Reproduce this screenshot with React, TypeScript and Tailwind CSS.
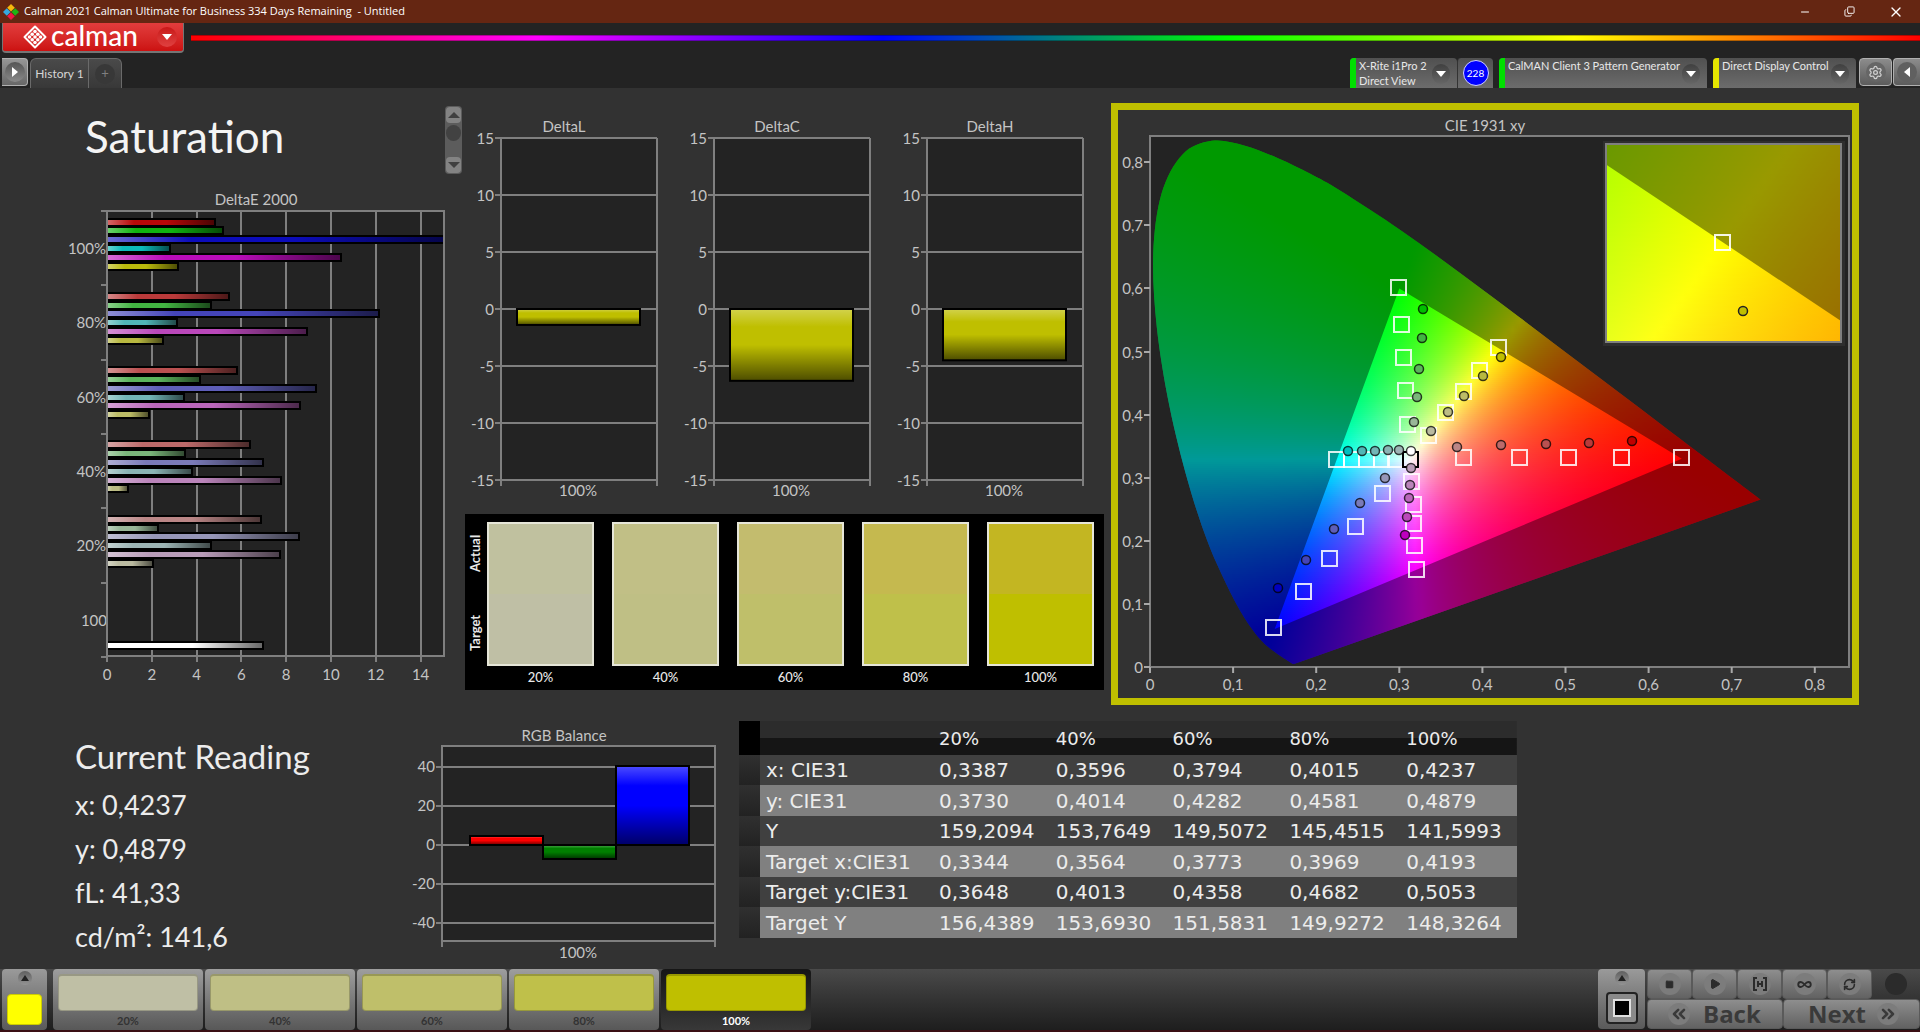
import React from 'react';
import { Minus, Copy, X, Settings, Play, Square, RefreshCw, Infinity as InfinityIcon, ChevronsLeft, ChevronsRight } from 'lucide-react';

type Point = [number, number];

interface Series {
  label: string;
  ends: number[];
  colors: string[];
}

const AXIS = '#7f7f7f';
const LABEL = '#c4c4c4';

const deltaE: Series[] = [
  { label: '100%', ends: [215, 223, 444, 170, 341, 178], colors: ['#b80808', '#10b410', '#0c0cba', '#0cbaba', '#ba0cba', '#baba0c'] },
  { label: '80%', ends: [229, 211, 379, 177, 307, 163], colors: ['#ba3a3a', '#42b442', '#4444b8', '#50b6b6', '#ba48ba', '#b8b840'] },
  { label: '60%', ends: [237, 200, 316, 184, 300, 149], colors: ['#ba5050', '#5cb45c', '#5e5eb8', '#72b6b6', '#ba66ba', '#bcbc66'] },
  { label: '40%', ends: [250, 185, 263, 192, 281, 128], colors: ['#bc6a6a', '#7ab67a', '#7a7ab8', '#8ab4b4', '#ba84ba', '#bcbc84'] },
  { label: '20%', ends: [261, 158, 299, 211, 280, 153], colors: ['#ba8686', '#98b698', '#9696b8', '#9cb4b4', '#b89cb8', '#babaa0'] },
];

const saturations = [
  { label: '20%', actual: '#c0c19f', target: '#bfbfa5' },
  { label: '40%', actual: '#c1bf86', target: '#bfbf85' },
  { label: '60%', actual: '#c3bc6e', target: '#bfbf6a' },
  { label: '80%', actual: '#c5b94f', target: '#bfc04a' },
  { label: '100%', actual: '#c3b622', target: '#bfbf00' },
];

const readings = [
  { label: 'x: CIE31', values: ['0,3387', '0,3596', '0,3794', '0,4015', '0,4237'] },
  { label: 'y: CIE31', values: ['0,3730', '0,4014', '0,4282', '0,4581', '0,4879'] },
  { label: 'Y', values: ['159,2094', '153,7649', '149,5072', '145,4515', '141,5993'] },
  { label: 'Target x:CIE31', values: ['0,3344', '0,3564', '0,3773', '0,3969', '0,4193'] },
  { label: 'Target y:CIE31', values: ['0,3648', '0,4013', '0,4358', '0,4682', '0,5053'] },
  { label: 'Target Y', values: ['156,4389', '153,6930', '151,5831', '149,9272', '148,3264'] },
];

// Spectral locus, CIE 1931 2 degree observer
const locus: Point[] = [
  [0.1741, 0.005], [0.1714, 0.0051], [0.1644, 0.0109], [0.1566, 0.0177], [0.144, 0.0297], [0.1355, 0.0399],
  [0.1241, 0.0578], [0.1096, 0.0868], [0.0913, 0.1327], [0.0687, 0.2007], [0.0454, 0.295], [0.0235, 0.4127],
  [0.0082, 0.5384], [0.0039, 0.6548], [0.0139, 0.7502], [0.0389, 0.812], [0.0743, 0.8338], [0.1142, 0.8262],
  [0.1547, 0.8059], [0.1929, 0.7816], [0.2296, 0.7543], [0.3016, 0.6923], [0.3731, 0.6245], [0.4441, 0.5547],
  [0.5125, 0.4866], [0.5752, 0.4242], [0.627, 0.3725], [0.6658, 0.334], [0.6915, 0.3083], [0.719, 0.2809], [0.7347, 0.2653],
];
const gamut: Point[] = [[0.64, 0.33], [0.3, 0.6], [0.15, 0.06]];

const targets: Point[] = [
  [1463, 457], [1519, 457], [1568, 457], [1621, 457], [1681, 457],
  [1398, 287], [1401, 324], [1403, 357], [1405, 390], [1407, 424],
  [1498, 347], [1479, 370], [1463, 391], [1445, 412], [1428, 435],
  [1336, 459], [1351, 459], [1366, 459], [1381, 459], [1395, 459],
  [1411, 481], [1413, 504], [1413, 523], [1414, 545], [1416, 569],
  [1382, 493], [1355, 526], [1329, 558], [1303, 591], [1273, 627],
];
const measured: [number, number, string][] = [
  [1457, 447, '#bc8686'], [1501, 445, '#bc6a6a'], [1546, 444, '#ba5050'], [1589, 443, '#ba3a3a'], [1632, 441, '#bf0000'],
  [1414, 422, '#98b698'], [1417, 397, '#7ab67a'], [1419, 369, '#5cb45c'], [1422, 338, '#42b442'], [1423, 309, '#00bf00'],
  [1431, 431, '#babaa0'], [1448, 412, '#bcbc84'], [1464, 396, '#bcbc66'], [1483, 376, '#b8b840'], [1501, 357, '#bfbf00'],
  [1399, 450, '#9cb4b4'], [1388, 450, '#8ab4b4'], [1375, 451, '#72b6b6'], [1362, 451, '#50b6b6'], [1348, 451, '#00bfbf'],
  [1411, 468, '#b89cb8'], [1410, 485, '#ba84ba'], [1409, 498, '#ba66ba'], [1407, 517, '#ba48ba'], [1405, 535, '#bf00bf'],
  [1385, 478, '#9696b8'], [1360, 503, '#7a7ab8'], [1334, 529, '#5e5eb8'], [1306, 560, '#4444b8'], [1278, 588, '#0000bf'],
  [1411, 451, '#ffffff'],
];

function xyColor(x: number, y: number) {
  const X = x / y;
  const Z = (1 - x - y) / y;
  const rgb = [
    3.2406 * X - 1.5372 - 0.4986 * Z,
    -0.9689 * X + 1.8758 + 0.0415 * Z,
    0.0557 * X - 0.204 + 1.057 * Z,
  ].map((c) => Math.max(0, c));
  const peak = Math.max(...rgb);
  const [r, g, b] = rgb.map((c) => Math.round((255 * c) / peak));
  return `rgb(${r},${g},${b})`;
}

interface ChromaFieldProps {
  id: string;
  left: number;
  right: number;
  top: number;
  bottom: number;
  toX: (px: number) => number;
  toY: (py: number) => number;
}

// Chromaticity colours as thin rows, each one with its own horizontal gradient
function ChromaField({ id, left, right, top, bottom, toX, toY }: ChromaFieldProps) {
  const rows: number[] = [];
  for (let py = top; py < bottom; py += 2) rows.push(py);
  const stops = Math.round((right - left) / 7);
  return (
    <g shapeRendering="crispEdges">
      {rows.map((py) => (
        <React.Fragment key={py}>
          <linearGradient id={`${id}${py}`} gradientUnits="userSpaceOnUse" x1={left} x2={right} y1="0" y2="0">
            {Array.from({ length: stops + 1 }, (_, i) => (
              <stop key={i} offset={i / stops} stopColor={xyColor(toX(left + ((right - left) * i) / stops), Math.max(0.002, toY(py + 1)))} />
            ))}
          </linearGradient>
          <rect x={left} y={py} width={right - left} height={Math.min(2, bottom - py)} fill={`url(#${id}${py})`} />
        </React.Fragment>
      ))}
    </g>
  );
}

function ShadeDefs() {
  return (
    <svg className="absolute h-0 w-0" aria-hidden="true">
      <defs>
        <linearGradient id="shadeX">
          <stop offset="0" stopColor="#fff" stopOpacity="0.4" />
          <stop offset="0.25" stopColor="#fff" stopOpacity="0" />
          <stop offset="0.55" stopColor="#000" stopOpacity="0" />
          <stop offset="1" stopColor="#000" stopOpacity="0.6" />
        </linearGradient>
        <linearGradient id="shadeY" x2="0" y2="1">
          <stop offset="0" stopColor="#fff" stopOpacity="0.3" />
          <stop offset="0.25" stopColor="#fff" stopOpacity="0" />
          <stop offset="0.5" stopColor="#000" stopOpacity="0" />
          <stop offset="1" stopColor="#000" stopOpacity="0.6" />
        </linearGradient>
      </defs>
    </svg>
  );
}

interface BarProps {
  x: number;
  y: number;
  w: number;
  h: number;
  color: string;
  shade: string;
}

function Bar({ x, y, w, h, color, shade }: BarProps) {
  return (
    <g>
      <rect x={x} y={y} width={w} height={h} fill={color} />
      <rect x={x} y={y} width={w} height={h} fill={shade} stroke="#000" strokeWidth="2" />
    </g>
  );
}

function DeltaEChart() {
  const step = 74.3;
  return (
    <svg viewBox="0 190 465 500" className="block w-full text-[15px]" role="img" aria-label="DeltaE 2000">
      <rect x="107" y="211" width="337" height="445" fill="#232323" />
      <text x="256" y="205" textAnchor="middle" fill={LABEL}>DeltaE 2000</text>
      {[0, 2, 4, 6, 8, 10, 12, 14].map((v) => (
        <g key={v}>
          <path d={`M${Math.round(107 + v * 22.4)} 211V662`} stroke={AXIS} strokeWidth="2" />
          <text x={107 + v * 22.4} y="680" textAnchor="middle" fill={LABEL}>{v}</text>
        </g>
      ))}
      {deltaE.map((group, g) => (
        <g key={group.label}>
          <text x="106" y={Math.round(254 + g * step)} textAnchor="end" fill={LABEL}>{group.label}</text>
          {group.ends.map((end, i) => (
            <Bar key={i} x={107} y={Math.round(g * step + 218.5 + i * 8.8)} w={end - 107} h={7} color={group.colors[i]} shade="url(#shadeX)" />
          ))}
        </g>
      ))}
      <text x="107" y="626" textAnchor="end" fill={LABEL}>100</text>
      <Bar x={107} y={642} w={156} h={7} color="#fff" shade="url(#shadeX)" />
      {[0, 1, 2, 3, 4, 5, 6].map((i) => (
        <path key={i} d={`M101 ${Math.round(211 + i * step)}H107`} stroke={AXIS} strokeWidth="2" />
      ))}
      <rect x="107" y="211" width="337" height="445" fill="none" stroke={AXIS} strokeWidth="2" />
    </svg>
  );
}

function DeltaChart({ title, value }: { title: string; value: number }) {
  const unit = 11.4;
  return (
    <svg viewBox="0 115 213 390" className="block w-full text-[15px]" role="img" aria-label={title}>
      <rect x="36" y="138" width="156" height="342" fill="#232323" />
      <text x="99" y="132" textAnchor="middle" fill={LABEL}>{title}</text>
      {[15, 10, 5, 0, -5, -10, -15].map((v) => (
        <g key={v}>
          <path d={`M30 ${309 - v * unit}H192`} stroke={AXIS} strokeWidth="2" />
          <text x="29" y={315 - v * unit} textAnchor="end" fill={LABEL}>{v}</text>
        </g>
      ))}
      <path d="M36 138V486M192 138V486" stroke={AXIS} strokeWidth="2" />
      <Bar x={52} y={309} w={123} h={value * unit} color="#bfbf00" shade="url(#shadeY)" />
      <text x="113" y="496" textAnchor="middle" fill={LABEL}>100%</text>
    </svg>
  );
}

function RgbBalance() {
  return (
    <svg viewBox="400 725 320 240" className="block w-full text-[15px]" role="img" aria-label="RGB Balance">
      <rect x="442" y="746" width="273" height="195" fill="#232323" />
      <text x="564" y="741" textAnchor="middle" fill={LABEL}>RGB Balance</text>
      {[40, 20, 0, -20, -40].map((v) => (
        <g key={v}>
          <path d={`M436 ${Math.round(845 - v * 1.95)}H715`} stroke={AXIS} strokeWidth="2" />
          <text x="435" y={850 - v * 1.95} textAnchor="end" fill={LABEL}>{v}</text>
        </g>
      ))}
      <path d="M442 746H715M442 941H715M442 745V947M715 745V947" stroke={AXIS} strokeWidth="2" />
      <Bar x={470} y={836} w={73} h={9} color="#ff0000" shade="url(#shadeY)" />
      <Bar x={543} y={845} w={73} h={14} color="#008000" shade="url(#shadeY)" />
      <Bar x={616} y={766} w={73} h={79} color="#0000ff" shade="url(#shadeY)" />
      <text x="578" y="958" textAnchor="middle" fill={LABEL}>100%</text>
    </svg>
  );
}

function CieChart() {
  const px = (x: number) => 1150 + x * 831;
  const py = (y: number) => 667 - y * 631;
  const outline = (points: Point[]) => `M${points.map(([x, y]) => `${px(x).toFixed(1)} ${py(y).toFixed(1)}`).join('L')}Z`;
  // Catmull-Rom through the locus, closed by the straight line of purples
  const at = (i: number) => locus[Math.max(0, Math.min(locus.length - 1, i))];
  const curve = locus.slice(1).map((p, i) => {
    const c1 = [at(i)[0] + (p[0] - at(i - 1)[0]) / 6, at(i)[1] + (p[1] - at(i - 1)[1]) / 6];
    const c2 = [p[0] - (at(i + 2)[0] - at(i)[0]) / 6, p[1] - (at(i + 2)[1] - at(i)[1]) / 6];
    return `C${px(c1[0])} ${py(c1[1])} ${px(c2[0])} ${py(c2[1])} ${px(p[0])} ${py(p[1])}`;
  }).join('');
  const locusPath = `M${px(locus[0][0])} ${py(locus[0][1])}${curve}Z`;

  return (
    <svg viewBox="1118 110 734 588" className="block w-full text-[15px]" role="img" aria-label="CIE 1931 xy">
      <defs>
        <clipPath id="locusClip"><path d={locusPath} /></clipPath>
        <clipPath id="insetClip"><rect x="1606" y="144" width="235" height="198" /></clipPath>
      </defs>
      <text x="1485" y="131" textAnchor="middle" fill={LABEL}>CIE 1931 xy</text>
      <rect x="1150" y="136" width="699" height="531" fill="#232323" stroke={AXIS} strokeWidth="2" />
      {[0, 1, 2, 3, 4, 5, 6, 7, 8].map((n) => {
        const label = n === 0 ? '0' : `0,${n}`;
        return (
          <g key={n}>
            <path d={`M1144 ${Math.round(py(n / 10))}H1150M${px(n / 10)} 667V673`} stroke="#a8a8a8" strokeWidth="2" />
            <text x="1143" y={py(n / 10) + 6} textAnchor="end" fill={LABEL}>{label}</text>
            <text x={px(n / 10)} y="690" textAnchor="middle" fill={LABEL}>{label}</text>
          </g>
        );
      })}
      <g clipPath="url(#locusClip)">
        <ChromaField id="main" left={1150} right={1764} top={138} bottom={666} toX={(v) => (v - 1150) / 831} toY={(v) => (667 - v) / 631} />
        <path d={`M1140 130H1780V680H1140Z${outline(gamut)}`} fillRule="evenodd" fill="#000" fillOpacity="0.4" />
      </g>
      {targets.map(([x, y], i) => (
        <rect key={i} x={x - 7} y={y - 7} width="15" height="15" fill="none" stroke="#fff" strokeWidth="2" strokeOpacity="0.85" />
      ))}
      <rect x="1403" y="452" width="15" height="15" fill="none" stroke="#000" strokeWidth="2" />
      {measured.map(([x, y, color], i) => (
        <circle key={i} cx={x} cy={y} r="4.5" fill={color} stroke="#000" strokeOpacity="0.75" strokeWidth="1.5" />
      ))}
      <rect x="1603" y="141" width="242" height="205" fill="#2e2e2e" />
      <g clipPath="url(#insetClip)">
        <ChromaField id="inset" left={1606} right={1841} top={144} bottom={342} toX={(v) => 0.4193 + (v - 1722) / 4700} toY={(v) => 0.5053 - (v - 242) / 3983} />
        <path d="M1606 164.5L1841 321V144H1606Z" fill="#000" fillOpacity="0.4" />
      </g>
      <rect x="1606" y="144" width="235" height="198" fill="none" stroke={AXIS} strokeWidth="2" />
      <rect x="1715" y="235" width="15" height="15" fill="none" stroke="#fff" strokeWidth="2" strokeOpacity="0.9" />
      <circle cx="1743" cy="311" r="4.5" fill="#bfbf00" stroke="#222" strokeWidth="1.5" />
    </svg>
  );
}

function AppIcon() {
  return (
    <svg viewBox="0 0 16 16" className="h-4 w-4">
      <path d="M8 0l3.800 3.800L8 7.600 4.200 3.800z" fill="#f5b80c" />
      <path d="M12.200 4.200L16 8l-3.800 3.800L8.400 8z" fill="#1fb414" />
      <path d="M8 8.400l3.800 3.800L8 16l-3.800-3.800z" fill="#f01446" />
      <path d="M3.800 4.200L7.600 8l-3.800 3.800L0 8z" fill="#35a8e0" />
    </svg>
  );
}

function CalmanLogo() {
  return (
    <svg viewBox="0 0 24 24" className="h-6 w-6">
      <path d="M12 1.500L22.500 12 12 22.500 1.500 12z" fill="none" stroke="#fff" strokeWidth="2" strokeLinejoin="round" />
      {[[12, 6.500], [9.200, 9.200], [14.800, 9.200], [6.500, 12], [12, 12], [17.500, 12], [9.200, 14.800], [14.800, 14.800], [12, 17.500]].map(([x, y], i) => (
        <circle key={i} cx={x} cy={y} r="1.800" fill="#fff" />
      ))}
    </svg>
  );
}

function Caret({ className }: { className: string }) {
  return (
    <span className={`flex shrink-0 items-center justify-center rounded-full ${className}`}>
      <svg viewBox="0 0 10 6" className="h-[6px] w-[10px]"><path d="M0 0h10L5 6z" fill="#fff" /></svg>
    </span>
  );
}

interface SourceTabProps {
  lines: string[];
  strip: string;
  width: string;
}

function SourceTab({ lines, strip, width }: SourceTabProps) {
  return (
    <button className={`flex h-full items-start overflow-hidden rounded-t bg-gradient-to-b from-[#505050] to-[#6c6c6c] text-left ${width}`}>
      <span className={`h-full w-[6px] shrink-0 ${strip}`} />
      <span className="flex-1 pl-[3px] text-[11px] leading-[15px] whitespace-nowrap text-[#e8e8e8]">
        {lines.map((line) => (
          <span key={line} className="block">{line}</span>
        ))}
      </span>
      <Caret className="mt-[6px] mr-[7px] h-[20px] w-[18px] bg-gradient-to-b from-[#404040] to-[#666666]" />
    </button>
  );
}

function Header() {
  return (
    <header className="bg-[#232323]">
      <div className="flex h-[23px] items-center bg-[#652612] pl-[3px] text-white">
        <AppIcon />
        <span className="flex-1 pl-[5px] text-[11px] whitespace-pre [font-family:'Open_Sans',sans-serif]">Calman 2021 Calman Ultimate for Business 334 Days Remaining  - Untitled</span>
        <button aria-label="Minimize" className="flex w-[45px] justify-center"><Minus className="h-3 w-3" strokeWidth={2} /></button>
        <button aria-label="Restore" className="flex w-[45px] justify-center"><Copy className="h-[11px] w-[11px] -scale-x-100 rotate-180" strokeWidth={2} /></button>
        <button aria-label="Close" className="flex w-[48px] justify-center"><X className="h-4 w-4" strokeWidth={2} /></button>
      </div>
      <div className="flex h-[30px] items-start pl-[2px]">
        <button className="flex h-[30px] w-[182px] shrink-0 items-center rounded-b border-x border-b-2 border-[#757575] bg-gradient-to-b from-[#e23c3c] to-[#cc1010] pl-[20px] text-white">
          <CalmanLogo />
          <span className="flex-1 pb-[4px] pl-[4px] text-left text-[28px] leading-[24px] font-medium">calman</span>
          <Caret className="mr-[6px] h-[20px] w-[20px] bg-gradient-to-b from-[#c81616] to-[#e04040]" />
        </button>
        <div className="mt-[12px] ml-[7px] h-[6px] flex-1 border-y border-black/30 bg-[linear-gradient(to_right,#f00,#f0f,#00f,#0f0,#ff0,#f00)]" />
      </div>
      <div className="flex h-[35px] items-start pt-[5px] pl-[2px]">
        <button aria-label="Show workflow" className="flex h-[28px] w-[26px] items-center justify-center rounded-r border border-l-0 border-[#b0b0b0] bg-gradient-to-b from-[#969696] to-[#686868]">
          <span className="flex h-[20px] w-[20px] items-center justify-center rounded-full bg-gradient-to-b from-[#555555] to-[#8a8a8a]">
            <svg viewBox="0 0 6 10" className="h-[10px] w-[6px]"><path d="M0 0l6 5-6 5z" fill="#fff" /></svg>
          </span>
        </button>
        <div className="ml-[2px] flex h-[30px] rounded-t-md border border-b-0 border-[#6a6a6a] bg-gradient-to-b from-[#4a4a4a] to-[#383838]">
          <button className="w-[58px] border-r border-[#6a6a6a] text-[12px] text-[#d6d6d6]">History 1</button>
          <button aria-label="Add history" className="flex w-[32px] items-center justify-center">
            <span className="flex h-[20px] w-[20px] items-center justify-center rounded-full bg-[#383838] text-[13px] text-[#808080]">+</span>
          </button>
        </div>
        <div className="ml-auto flex h-[30px]">
          <SourceTab lines={['X-Rite i1Pro 2', 'Direct View']} strip="bg-[#00e000]" width="w-[107px]" />
          <div className="mr-[6px] flex w-[36px] items-center justify-center rounded-t border-l border-[#333333] bg-gradient-to-b from-[#505050] to-[#6c6c6c]">
            <span className="flex h-[26px] w-[26px] items-center justify-center rounded-full border border-[#d0d0ff] bg-[#0000ff] text-[10px] text-white">228</span>
          </div>
          <SourceTab lines={['CalMAN Client 3 Pattern Generator']} strip="bg-[#00e000]" width="w-[208px]" />
          <div className="w-[6px]" />
          <SourceTab lines={['Direct Display Control']} strip="bg-[#e6e600]" width="w-[143px]" />
          <button aria-label="Settings" className="ml-[3px] flex h-[28px] w-[33px] items-center justify-center rounded border border-[#b0b0b0] bg-gradient-to-b from-[#8c8c8c] to-[#5c5c5c]">
            <span className="flex h-[20px] w-[20px] items-center justify-center rounded-full bg-[#666666]"><Settings className="h-[15px] w-[15px] text-[#d0d0d0]" /></span>
          </button>
          <button aria-label="Hide panel" className="ml-px flex h-[28px] w-[27px] items-center justify-center rounded-l border border-r-0 border-[#b0b0b0] bg-gradient-to-b from-[#8c8c8c] to-[#5c5c5c]">
            <span className="flex h-[20px] w-[20px] items-center justify-center rounded-full bg-[#606060]">
              <svg viewBox="0 0 6 10" className="h-[10px] w-[6px]"><path d="M6 0L0 5l6 5z" fill="#fff" /></svg>
            </span>
          </button>
        </div>
      </div>
    </header>
  );
}

function PageScroller() {
  return (
    <div className="flex h-[68px] w-[17px] flex-col items-center justify-between rounded bg-[#5c5c5c] p-px">
      <button aria-label="Previous" className="flex h-[16px] w-[15px] items-center justify-center rounded bg-[#838383]">
        <svg viewBox="0 0 12 6" className="h-[6px] w-[12px]"><path d="M0 6h12L6 0z" fill="#404040" /></svg>
      </button>
      <span className="-mt-[14px] h-[16px] w-[15px] rounded-full bg-[#424242]" />
      <button aria-label="Next" className="flex h-[16px] w-[15px] items-center justify-center rounded bg-[#838383]">
        <svg viewBox="0 0 12 6" className="h-[6px] w-[12px]"><path d="M0 0h12L6 6z" fill="#404040" /></svg>
      </button>
    </div>
  );
}

function SwatchPanel() {
  return (
    <section className="mt-[9px] flex h-[176px] bg-black pt-[8px] pr-[10px]">
      <div className="flex w-[22px] flex-col items-center pr-[2px] text-[13px] leading-[16px] font-bold text-[#e8e8e8]">
        <span className="flex h-[62px] rotate-180 items-center justify-center [writing-mode:vertical-rl]">Actual</span>
        <span className="mt-[20px] flex h-[58px] rotate-180 items-center justify-center [writing-mode:vertical-rl]">Target</span>
      </div>
      <div className="grid flex-1 grid-cols-5 gap-[18px]">
        {saturations.map((s) => (
          <div key={s.label} className="text-center text-[13px] leading-[22px] font-medium text-[#e8e8e8]">
            <div className="flex h-[144px] flex-col border-2 border-[#e6e6d8]">
              <div className="flex-1" style={{ backgroundColor: s.actual }} />
              <div className="flex-1" style={{ backgroundColor: s.target }} />
            </div>
            {s.label}
          </div>
        ))}
      </div>
    </section>
  );
}

function ReadingsTable() {
  return (
    <table className="w-[778px] table-fixed border-collapse text-left text-[20px] leading-[24px] text-[#ececec] [font-family:'DejaVu_Sans',sans-serif]">
      <colgroup>
        <col className="w-[21px]" />
        <col className="w-[173px]" />
        <col span={5} />
      </colgroup>
      <thead>
        <tr className="h-[34px] bg-[linear-gradient(#2c2c2c_50%,#151515_50%)] text-[18px]">
          <td className="bg-black" />
          <td />
          {saturations.map((s) => (
            <th key={s.label} scope="col" className="pt-[2px] pl-[6px] font-normal">{s.label}</th>
          ))}
        </tr>
      </thead>
      <tbody>
        {readings.map((row) => (
          <tr key={row.label} className="h-[30px] bg-[#404040] even:h-[31px] even:bg-[#808080]">
            <td className="bg-gradient-to-b from-[#303030] to-[#222222]" />
            <th scope="row" className="pl-[6px] font-normal whitespace-nowrap">{row.label}</th>
            {row.values.map((value) => (
              <td key={value} className="pl-[6px]">{value}</td>
            ))}
          </tr>
        ))}
      </tbody>
    </table>
  );
}

function UpArrow() {
  return (
    <span className="flex h-[14px] w-[14px] items-center justify-center rounded-full bg-gradient-to-b from-[#606060] to-[#949494]">
      <svg viewBox="0 0 8 6" className="h-[6px] w-[8px]"><path d="M0 6h8L4 0z" fill="#222" /></svg>
    </span>
  );
}

function MediaButton({ label, children }: { label: string; children: React.ReactNode }) {
  return (
    <button aria-label={label} className="flex h-[30px] w-[45px] items-center justify-center rounded border border-[#5a5a5a] bg-gradient-to-b from-[#8e8e8e] to-[#626262]">
      <span className="flex h-[22px] w-[22px] items-center justify-center rounded-full bg-[#7c7c7c] text-[#2b2b2b]">{children}</span>
    </button>
  );
}

function Footer() {
  return (
    <footer className="flex h-[63px] items-start border-b-2 border-[#3a0f14] bg-gradient-to-b from-[#4a4a4a] to-[#1e1e1e] pl-[2px]">
      <button aria-label="Current color" className="flex h-[61px] w-[45px] flex-col items-center rounded bg-gradient-to-b from-[#9a9a9a] to-[#5a5a5a] pt-[2px]">
        <UpArrow />
        <span className="mt-[9px] h-[31px] w-[35px] rounded border border-[#cccc00] bg-[#ffff00]" />
      </button>
      <div className="ml-[6px] flex gap-[2px]">
        {saturations.map((s) => (
          <button
            key={s.label}
            className="h-[61px] w-[150px] rounded bg-gradient-to-b from-[#9e9e9e] to-[#585858] px-[5px] pt-[5px] text-[11px] font-bold text-[#333333] last:from-[#161616] last:to-[#383838] last:text-white"
          >
            <span className="block h-[37px] rounded border border-t-2 border-black/20 bg-clip-border" style={{ backgroundColor: s.target }} />
            <span className="block leading-[19px]">{s.label}</span>
          </button>
        ))}
      </div>
      <div className="ml-auto flex gap-[2px]">
        <button aria-label="Pattern window" className="flex h-[60px] w-[47px] flex-col items-center rounded bg-gradient-to-b from-[#9a9a9a] to-[#5a5a5a] pt-[2px]">
          <UpArrow />
          <span className="mt-[7px] flex h-[32px] w-[32px] items-center justify-center rounded border-2 border-[#222222] bg-[#8a8a8a]">
            <span className="flex h-[18px] w-[18px] items-center justify-center border-2 border-[#e0e0e0] bg-black" />
          </span>
        </button>
        <div>
          <div className="flex">
            <MediaButton label="Stop"><Square className="h-[9px] w-[9px]" fill="currentColor" /></MediaButton>
            <MediaButton label="Play"><Play className="h-[12px] w-[12px]" fill="currentColor" /></MediaButton>
            <MediaButton label="Read series">
              <svg viewBox="0 0 14 14" className="h-[14px] w-[14px]" fill="none" stroke="currentColor" strokeWidth="2"><path d="M4 1H1v12h3M10 1h3v12h-3M5 4v6M9 4v6M5 7h4" /></svg>
            </MediaButton>
            <MediaButton label="Read continuously"><InfinityIcon className="h-[15px] w-[15px]" strokeWidth={3} /></MediaButton>
            <MediaButton label="Refresh"><RefreshCw className="h-[13px] w-[13px]" strokeWidth={3} /></MediaButton>
            <span className="flex flex-1 items-center justify-center"><span className="h-[22px] w-[22px] rounded-full bg-[#2b2b2b]" /></span>
          </div>
          <div className="flex text-[24px] leading-[28px] font-bold text-[#3a3a3a] [font-family:'Open_Sans',sans-serif]">
            <button className="flex h-[30px] w-[136px] items-center gap-[13px] rounded border border-[#5a5a5a] bg-gradient-to-b from-[#8e8e8e] to-[#626262] pl-[20px]">
              <span className="flex h-[22px] w-[22px] items-center justify-center rounded-full bg-[#7c7c7c]"><ChevronsLeft className="h-[20px] w-[20px]" strokeWidth={3} /></span>
              Back
            </button>
            <button className="flex h-[30px] w-[137px] items-center justify-between rounded border border-[#5a5a5a] bg-gradient-to-b from-[#8e8e8e] to-[#626262] pr-[20px] pl-[24px]">
              Next
              <span className="flex h-[22px] w-[22px] items-center justify-center rounded-full bg-[#7c7c7c]"><ChevronsRight className="h-[20px] w-[20px]" strokeWidth={3} /></span>
            </button>
          </div>
        </div>
      </div>
    </footer>
  );
}

export default function App() {
  return (
    <div className="flex min-h-screen flex-col bg-[#323232] [font-family:Lato,sans-serif]">
      <ShadeDefs />
      <Header />
      <main className="flex-1">
        <div className="grid grid-cols-[465fr_639fr_755fr] items-start pr-[61px]">
          <section>
            <div className="flex h-[102px] items-start justify-between pt-[18px] pr-[3px] pl-[85px]">
              <h1 className="pt-[4px] text-[44px] leading-[52px] text-[#f4f4f4]">Saturation</h1>
              <PageScroller />
            </div>
            <DeltaEChart />
          </section>
          <section className="pt-[27px]">
            <div className="grid grid-cols-3">
              <DeltaChart title="DeltaL" value={1.4} />
              <DeltaChart title="DeltaC" value={6.3} />
              <DeltaChart title="DeltaH" value={4.5} />
            </div>
            <SwatchPanel />
          </section>
          <section className="pt-[15px] pl-[7px]">
            <div className="border-[7px] border-[#bfbf00]">
              <CieChart />
            </div>
          </section>
        </div>
        <div className="grid grid-cols-[400fr_320fr_1200fr] items-start pt-[16px]">
          <section className="pt-[13px] pl-[75px] text-[#ececec]">
            <h2 className="pb-[5px] text-[33px] leading-[44px]">Current Reading</h2>
            <div className="text-[27px] leading-[44px]">
              <p>x: 0,4237</p>
              <p>y: 0,4879</p>
              <p>fL: 41,33</p>
              <p>cd/m²: 141,6</p>
            </div>
          </section>
          <section className="pt-[4px]">
            <RgbBalance />
          </section>
          <section className="pl-[19px]">
            <ReadingsTable />
          </section>
        </div>
      </main>
      <Footer />
    </div>
  );
}
